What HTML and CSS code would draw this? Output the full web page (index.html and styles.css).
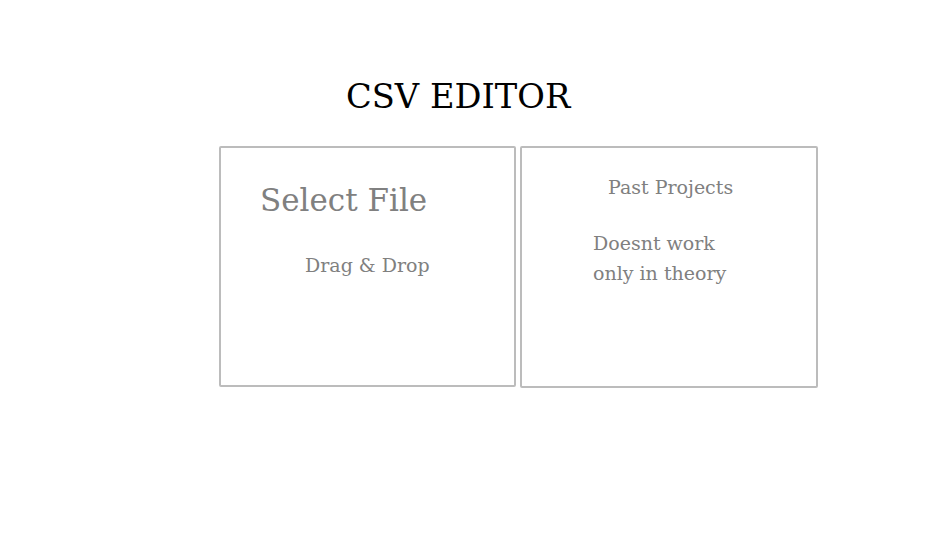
FILE: index.html
```html
<!DOCTYPE html>
<html>
<head>
<meta charset="utf-8">
<link rel="stylesheet" href="styles.css">
</head>
<body>
<div class="page">
  <h1 class="title">CSV EDITOR</h1>
  <div class="panels">
    <div class="panel">
      <h2 class="select-title">Select File</h2>
      <p class="drop">Drag &amp; Drop</p>
    </div>
    <div class="panel panel-past">
      <h3 class="past-title">Past Projects</h3>
      <p class="past-text">Doesnt work<br>only in theory</p>
    </div>
  </div>
</div>
</body>
</html>
```

FILE: styles.css
```css
html, body {
  margin: 0;
  padding: 0;
  background: #fff;
}
.page {
  font-family: "DejaVu Serif", serif;
  padding-top: 77px;
}
.title {
  margin: 0 0 0 346px;
  font-size: 33.7px;
  font-weight: normal;
  line-height: 40px;
  color: #000;
}
.panels {
  display: flex;
  align-items: flex-start;
  gap: 4px;
  margin: 29px 0 0 219px;
}
.panel {
  width: 293px;
  height: 237px;
  border: 2px solid #bcbcbc;
  border-radius: 2px;
  color: #808080;
}
.panel-past {
  width: 294px;
  height: 238px;
}
.select-title {
  margin: 30px 0 0 39px;
  font-size: 31px;
  font-weight: normal;
  line-height: 44px;
}
.drop {
  margin: 30px 0 0 84px;
  font-size: 19px;
  line-height: 26px;
}
.past-title {
  margin: 26px 0 0 86px;
  font-size: 19px;
  font-weight: normal;
  line-height: 26px;
}
.past-text {
  margin: 28px 0 0 71px;
  font-size: 19px;
  line-height: 30px;
}
```
